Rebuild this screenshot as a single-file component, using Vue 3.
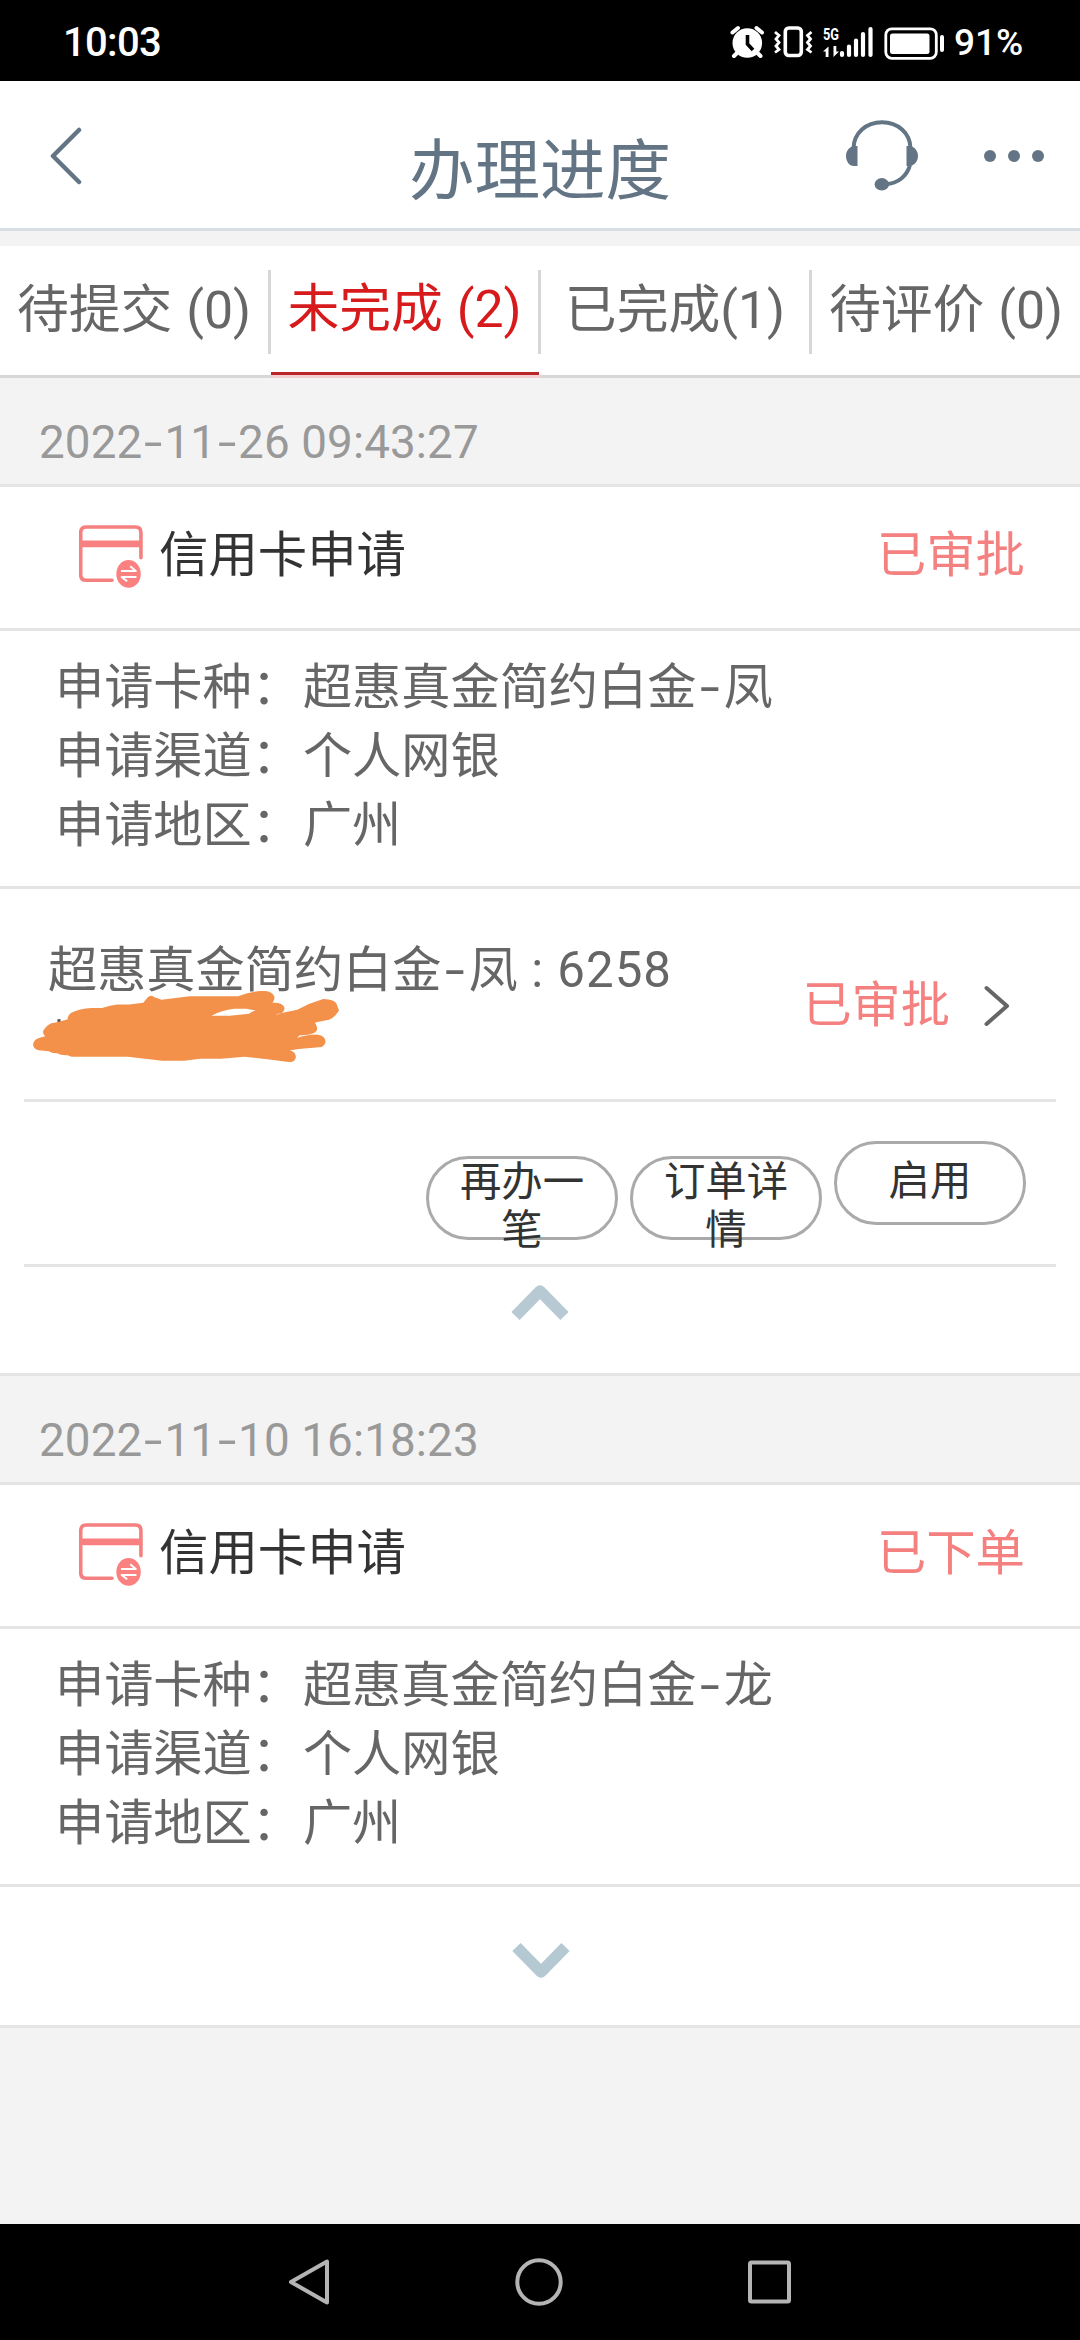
<script setup>
const tabs = [
  { text: '待提交 (0)', active: false },
  { text: '未完成 (2)', active: true },
  { text: '已完成(1)', active: false },
  { text: '待评价 (0)', active: false },
]

const orders = [
  {
    date: ['2022', '11', '26 09:43:27'],
    status: '已审批',
    name: '凤',
    expanded: true,
    actions: ['再办一笔', '订单详情', '启用'],
  },
  {
    date: ['2022', '11', '10 16:18:23'],
    status: '已下单',
    name: '龙',
    expanded: false,
    actions: [],
  },
]
</script>

<template>
  <div class="screen">
    <div class="statusbar">
      <span class="time">10:03</span>
      <svg class="sys" width="216" height="40" viewBox="729 20 216 40" fill="#fff">
        <circle cx="747.3" cy="41" r="14.8" />
        <path d="M732.5 30.5l5.5-4.5M762 30.5l-5.5-4.5M734 54l5-5M760.500 54l-5-5" stroke="#fff" stroke-width="4" stroke-linecap="round" />
        <path d="M747.500 33v9l5.500 6" fill="none" stroke="#000" stroke-width="3.600" />
        <rect x="785.300" y="26" width="16" height="27.500" rx="3.500" fill="none" stroke="#fff" stroke-width="3.600" />
        <path d="M775 30l4 3.500-3 3.500 3 3.500-3 3.500 3 3.500-4 3M811.500 30l-4 3.500 3 3.500-3 3.500 3 3.500-3 3.500 4 3" fill="none" stroke="#fff" stroke-width="2.800" />
        <text x="823" y="38" class="net" textLength="16" lengthAdjust="spacingAndGlyphs">5G</text>
        <path d="M823 49.500l5.500-5V55h-2.800V49.500zM839 49.500l-5.500 5.500V44h2.800v5.500z" />
        <path d="M842 51v2M849 44.500v8.500M856 38.500v14.500M863 32v21M870.500 27v26" stroke="#fff" stroke-width="4.200" stroke-linecap="round" />
        <rect x="885.800" y="26.800" width="50.500" height="29.500" rx="6" fill="none" stroke="#fff" stroke-width="2.800" />
        <rect x="890" y="31.500" width="39.500" height="20.500" rx="2.500" />
        <rect x="940" y="33" width="4" height="17" rx="2" />
      </svg>
      <span class="power">91%</span>
    </div>

    <header class="header">
      <svg class="back" width="34" height="58" viewBox="0 0 34 58"><path d="M30 3L4 29l26 26" fill="none" stroke="#637585" stroke-width="4.500" stroke-linecap="round" stroke-linejoin="round" /></svg>
      <h1>办理进度</h1>
      <svg class="service" width="72" height="71" viewBox="0 0 72 71">
        <path d="M7.500 28C8 13 20 2.200 36 2.200S64 13 64.500 28M64 45C61 56 52 63.500 40 64" fill="none" stroke="#637585" stroke-width="4" />
        <path d="M11.500 26H8C3 27 0 31 0 36s3 10 8 10h3.500zM60.500 26H64c5 1 8 5 8 10s-3 9-8 10h-3.500z" fill="#637585" />
        <ellipse cx="35.800" cy="64.300" rx="7.200" ry="6.200" fill="#637585" />
      </svg>
      <div class="more"><i></i><i></i><i></i></div>
    </header>

    <nav class="tabs">
      <div v-for="t in tabs" :key="t.text" class="tab" :class="{ active: t.active }"><span>{{ t.text }}</span></div>
    </nav>

    <section v-for="o in orders" :key="o.name" class="order">
      <div class="date">{{ o.date[0] }}<b class="wide">-</b>{{ o.date[1] }}<b class="wide">-</b>{{ o.date[2] }}</div>
      <div class="title">
        <svg width="64" height="63" viewBox="230 137 186 188" preserveAspectRatio="none">
          <path d="M410 235V160Q410 143 394 143H251Q235 143 235 160V285Q235 302 251 302H326" fill="none" stroke="#f58080" stroke-width="10.500" stroke-linecap="round" />
          <path d="M235 193.500H410" stroke="#f98080" stroke-width="20" />
          <ellipse cx="374" cy="283" rx="35.500" ry="41.500" fill="#fb8080" />
          <path d="M352 274H395L379 260M397 292H354L370 305" fill="none" stroke="#fff" stroke-width="6" stroke-linejoin="round" />
        </svg>
        <span class="name">信用卡申请</span>
        <span class="state">{{ o.status }}</span>
      </div>
      <div class="details">
        <div><span>申请卡种：</span><span>超惠真金简约白金<b class="wide">-</b>{{ o.name }}</span></div>
        <div><span>申请渠道：</span><span>个人网银</span></div>
        <div><span>申请地区：</span><span>广州</span></div>
      </div>

      <template v-if="o.expanded">
        <div class="card">
          <div class="number">
            <span>超惠真金简约白金<b class="wide">-</b>{{ o.name }}<span class="digits"> : 6258</span></span>
            <svg class="mask" width="306" height="71" viewBox="95 333 888 212" preserveAspectRatio="none">
              <path d="M166 417h9v12h-9z" fill="#555" />
              <path fill-rule="evenodd" fill="#f3914b" d="M95 493Q97 479 110 474L130 468Q122 461 125 451Q132 438 148 429L165 426L196 417Q194 407 205 399Q230 386 265 384H295Q320 375 340 373L375 373L415 368L428 352Q437 343 446 351L468 359L550 349H690Q725 335 755 333Q790 330 796 352Q796 362 790 368Q819 366 825 383Q825 393 816 399L862 389Q900 368 937 357Q972 359 976 372L983 391Q971 412 954 419L917 426Q912 427 915 431Q925 451 913 457Q903 464 868 466L861 473Q885 464 918 463Q943 465 944 485Q941 500 925 501L866 506L840 511Q856 513 858 530Q855 547 837 545L775 537L709 529L640 535H580L534 541H470L370 529H207L195 525Q175 526 165 519Q150 520 141 513L111 510Q97 507 95 493ZM613 407H666L722 401Q729 393 741 391L714 386H680Q641 391 613 407ZM799 404L817 400L805 401Z" />
            </svg>
          </div>
          <span class="state">{{ o.status }}</span>
          <svg class="go" width="26" height="42" viewBox="0 0 26 42"><path d="M2.500 3L23 21 2.500 39" fill="none" stroke="#666" stroke-width="4" stroke-linecap="round" stroke-linejoin="round" /></svg>
        </div>
        <div class="actions">
          <button v-for="a in o.actions" :key="a" :class="{ two: a.length > 2 }">{{ a }}</button>
        </div>
        <div class="fold up"><svg width="58" height="38" viewBox="0 0 58 38"><path d="M4.500 32L29 7l24.500 25" fill="none" stroke="#b7cad3" stroke-width="11.500" stroke-linejoin="round" /></svg></div>
      </template>
      <div v-else class="fold down"><svg width="58" height="38" viewBox="0 0 58 38"><path d="M4.500 6L29 31 53.500 6" fill="none" stroke="#b5c9d2" stroke-width="11.500" stroke-linejoin="round" /></svg></div>
    </section>

    <footer class="sysnav">
      <svg width="42" height="48" viewBox="0 0 42 48"><path d="M39 3.500v41L3 24z" /></svg>
      <svg width="48" height="48" viewBox="0 0 48 48"><circle cx="24" cy="24" r="21.700" /></svg>
      <svg width="43" height="44" viewBox="0 0 43 44"><rect x="2" y="2.500" width="39" height="39" rx="1.500" /></svg>
    </footer>
  </div>
</template>

<style>
body {
  margin: 0;
  background: #f3f3f3;
}
</style>

<style scoped>
.screen {
  width: 1080px;
  height: 2340px;
  display: flex;
  flex-direction: column;
  overflow: hidden;
  background: #f3f3f3;
  font-family: Roboto, "Noto Sans CJK SC", sans-serif;
  color: #666;
}
.screen * {
  box-sizing: border-box;
}
svg {
  display: block;
  flex: none;
}
.statusbar {
  height: 81px;
  flex: none;
  background: #000;
  color: #fff;
  display: flex;
  align-items: center;
  padding: 3px 58px 0 63px;
}
.time {
  font-size: 40px;
  font-weight: 500;
  letter-spacing: -0.7px;
}
.sys {
  margin-left: auto;
}
.net {
  font: bold 17px Roboto, sans-serif;
}
.power {
  width: 68px;
  margin-left: 9px;
  font-size: 37px;
  font-weight: 500;
  white-space: nowrap;
}
.header {
  height: 150px;
  flex: none;
  display: flex;
  align-items: center;
  padding: 0 36px 0 49px;
  border-bottom: 3px solid #d7dfe4;
  background: #fff;
  color: #637585;
}
.header h1 {
  margin: 34px 0 0 326px;
  font-size: 65.500px;
  line-height: 96px;
  font-weight: 400;
  white-space: nowrap;
}
.back {
  margin-top: 2px;
}
.service {
  margin: 2px 0 0 auto;
}
.more {
  display: flex;
  gap: 12px;
  margin: 2px 0 0 66px;
}
.more i {
  width: 12px;
  height: 12px;
  border-radius: 50%;
  background: #637585;
}
.tabs {
  height: 132px;
  flex: none;
  margin-top: 15px;
  display: flex;
  background: #fff;
  border-bottom: 3px solid #d6d7d7;
  font-size: 51.800px;
  word-spacing: 1px;
}
.tab {
  width: 270px;
  height: 129px;
  display: flex;
  padding-top: 24px;
}
.tab:nth-child(odd) {
  width: 271px;
}
.tab:last-child {
  width: 268px;
}
.tab span {
  flex: 1;
  height: 84px;
  line-height: 81px;
  text-align: center;
  white-space: nowrap;
  border-right: 3px solid #d6d7d7;
}
.tab:last-child span {
  border-right: 0;
}
.tab.active {
  color: #d71a1c;
  box-shadow: inset -2px 0 #fff, inset 0 -3px #b92528, 0 3px #f2d0d2;
}
.tab.active span {
  line-height: 79px;
}
.wide {
  display: inline-block;
  font-weight: 400;
  margin: 0 0.1em;
  transform: scaleX(1.45);
}
.order {
  flex: none;
}
.date {
  height: 109px;
  padding: 33px 0 0 39px;
  font-size: 45.800px;
  letter-spacing: 0.12px;
  line-height: 64px;
  color: #999;
  border-bottom: 3px solid #e4e4e4;
}
.title {
  height: 144px;
  display: flex;
  align-items: flex-start;
  padding: 38px 55px 0 79px;
  font-size: 49.400px;
  line-height: 61px;
  background: #fff;
  border-bottom: 3px solid #e4e4e4;
}
.name {
  margin-left: 16px;
  color: #333;
}
.state {
  margin-left: auto;
  color: #f58080;
}
.details {
  height: 258px;
  padding: 22px 0 0 55px;
  font-size: 49.200px;
  line-height: 69px;
  background: #fff;
  border-bottom: 3px solid #e4e4e4;
}
.details .wide,
.card .wide {
  margin: 0 0.14em;
}
.details div {
  display: flex;
  gap: 2px;
  height: 69px;
}
.card {
  height: 213px;
  display: flex;
  padding: 0 46px 0 24px;
  margin: 0 24px;
  font-size: 49.200px;
  line-height: 60px;
  border-bottom: 3px solid #e4e4e4;
}
.number {
  position: relative;
  padding-top: 51px;
  white-space: nowrap;
}
.digits {
  letter-spacing: 1px;
}
.mask {
  position: absolute;
  left: -15px;
  top: 102px;
}
.card .state {
  padding-top: 86px;
}
.card .go {
  margin: 96px 0 0 34px;
}
.order:has(.card) {
  background: linear-gradient(#f3f3f3 109px, #fff 109px);
}
.actions {
  height: 165px;
  margin: 0 24px;
  padding: 39px 30px 0 0;
  display: flex;
  align-items: flex-start;
  justify-content: flex-end;
  gap: 12px;
  border-bottom: 3px solid #e4e4e4;
}
.actions button {
  width: 192px;
  height: 84px;
  padding: 14px 30px 0;
  display: flex;
  align-items: flex-start;
  justify-content: center;
  border: 3px solid #aaa;
  border-radius: 42px;
  background: none;
  font: 41.400px/47.700px Roboto, "Noto Sans CJK SC", sans-serif;
  color: #333;
  word-break: break-all;
  text-align: center;
}
.actions .two {
  margin-top: 15px;
  padding-top: 0;
}
.fold {
  display: flex;
  justify-content: center;
  border-bottom: 3px solid #e4e4e4;
}
.up {
  height: 109px;
  padding-top: 17px;
}
.down {
  height: 141px;
  padding-top: 54px;
  padding-left: 1px;
  background: #fff;
}
.sysnav {
  height: 116px;
  margin-top: auto;
  flex: none;
  display: flex;
  align-items: center;
  justify-content: space-between;
  padding: 0 289px 0 288px;
  background: #000;
  fill: none;
  stroke: #b4b4b4;
  stroke-width: 4;
  stroke-linejoin: round;
}
</style>
